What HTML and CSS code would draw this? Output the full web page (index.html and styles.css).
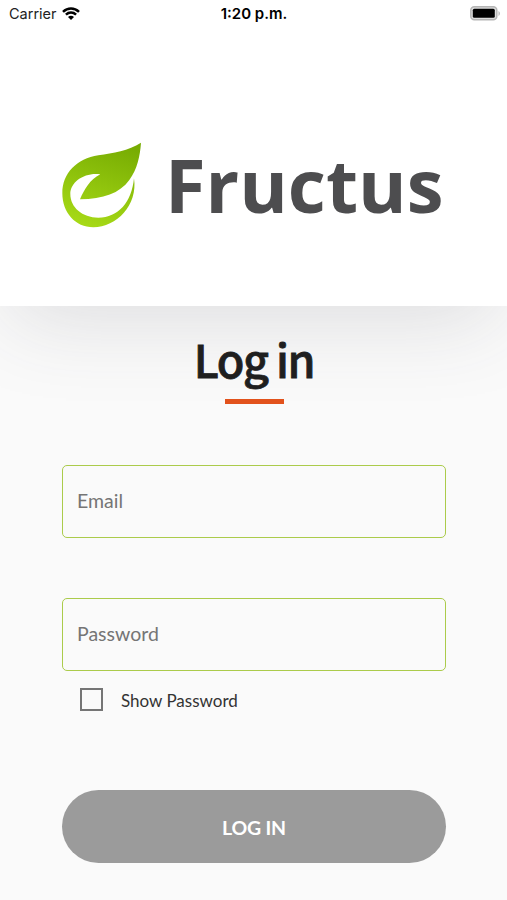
FILE: index.html
```html
<!DOCTYPE html>
<html lang="en">
<head>
  <meta charset="UTF-8">
  <meta name="viewport" content="width=device-width, initial-scale=1.0">
  <title>Fructus - Log in</title>
  <link rel="stylesheet" href="styles.css">
</head>
<body>
  <header class="header">
    <div class="status-bar">
      <div class="carrier">
        <span>Carrier</span>
        <svg class="wifi" viewBox="0 0 18 13">
          <path d="M1 4.8C5.6.4 12.4.4 17 4.8M3.9 7.7c3-2.8 7.2-2.8 10.2 0" fill="none" stroke="#000" stroke-width="2.5"/>
          <path d="M6 9.9c1.8-1.6 4.2-1.6 6 0L9 13z"/>
        </svg>
      </div>
      <div class="time">1:20 p.m.</div>
      <svg class="battery" viewBox="0 0 31 15">
        <rect x="0.8" y="0.8" width="26" height="13" rx="3.5" fill="#ddd" stroke="#b5b5b5" stroke-width="1.5"/>
        <rect x="2.8" y="2.8" width="22" height="9" rx="1.5"/>
        <path d="M28.5 5v5c1.8-.8 1.8-4.2 0-5z" fill="#b5b5b5"/>
      </svg>
    </div>
    <div class="brand">
      <svg class="leaf" viewBox="36 36 240 258">
        <defs>
          <linearGradient id="leaf-color" x1="0.7" y1="0" x2="0.4" y2="1">
            <stop offset="0" stop-color="#77ac02"/>
            <stop offset="1" stop-color="#a6d916"/>
          </linearGradient>
        </defs>
        <path fill="url(#leaf-color)" d="M273 38C235 62 190 69 145 76C80 86 37 130 37 190C37 248 76 292 130 292C200 292 264 225 252 145C245 217 205 263 145 263C97 263 61 232 61 192C61 155 105 126 151 133C119 150 104 176 90 208C160 207 209 190 238 150C262 117 270 78 273 38Z"/>
      </svg>
      <span class="brand-name">Fructus</span>
    </div>
  </header>

  <main class="content">
    <h1>Log in</h1>
    <div class="underline"></div>
    <form class="login-form">
      <input class="field" type="email" placeholder="Email">
      <input class="field" type="password" placeholder="Password">
      <label class="show-password">
        <input type="checkbox">
        <span>Show Password</span>
      </label>
      <button type="button">LOG IN</button>
    </form>
  </main>
</body>
</html>
```
FILE: styles.css
```css
* {
  box-sizing: border-box;
}
body {
  margin: 0;
  height: 900px;
  overflow: hidden;
  background: #fafafa;
  font-family: Lato, sans-serif;
}
.header {
  height: 306px;
  background: #fff;
  box-shadow: 0 24px 80px -10px rgba(60, 60, 75, 0.15);
}
.status-bar {
  display: grid;
  grid-template-columns: 1fr auto 1fr;
  align-items: center;
  height: 27px;
  padding: 0 6px 0 9px;
  font-family: Inter, sans-serif;
  font-size: 14.5px;
}
.carrier {
  display: flex;
  align-items: center;
  gap: 5px;
  color: #222;
}
.wifi {
  width: 18px;
  height: 13px;
}
.time {
  margin-right: 2px;
  font-size: 15px;
  font-weight: 600;
}
.battery {
  width: 31px;
  height: 15px;
  justify-self: end;
}
.brand {
  display: flex;
  padding: 115px 0 0 62px;
}
.leaf {
  width: 80px;
  height: 86px;
}
.brand-name {
  margin: -1px 0 0 23px;
  font-family: "Open Sans", sans-serif;
  font-size: 74px;
  font-weight: 700;
  line-height: 88px;
  color: #4d4d4f;
}
.content {
  padding: 22px 61px 0 62px;
}
h1 {
  margin: 0;
  font-family: "Noto Sans CJK JP", sans-serif;
  font-size: 45px;
  font-weight: 500;
  line-height: 62px;
  letter-spacing: -1.5px;
  text-align: center;
  color: #1f1f1f;
  -webkit-text-stroke: 0.8px #1f1f1f;
}
.underline {
  width: 59px;
  height: 5px;
  margin: 9px auto 61px;
  background: #e2521c;
}
.login-form {
  display: flex;
  flex-direction: column;
}
.field {
  height: 73px;
  margin: 0 0 60px;
  padding: 0 14px 3px;
  border: 1.5px solid #abcb4b;
  border-radius: 5px;
  background: #fafafa;
  font-family: Lato, sans-serif;
  font-size: 19.5px;
}
.field::placeholder {
  color: #757575;
}
.field[type="password"] {
  margin-bottom: 17px;
}
.show-password {
  display: flex;
  align-items: center;
  gap: 18px;
  height: 24px;
  padding-left: 18px;
  font-size: 17px;
  color: #333;
}
.show-password input {
  appearance: none;
  width: 23px;
  height: 23px;
  margin: 0 0 2px;
  border: 2px solid #757575;
}
button {
  height: 73px;
  margin-top: 78px;
  padding: 2px 0 0;
  border: none;
  border-radius: 37px;
  background: #9b9b9b;
  color: #fff;
  font-family: Lato, sans-serif;
  font-size: 19.5px;
  font-weight: 700;
  letter-spacing: -0.2px;
}
```
